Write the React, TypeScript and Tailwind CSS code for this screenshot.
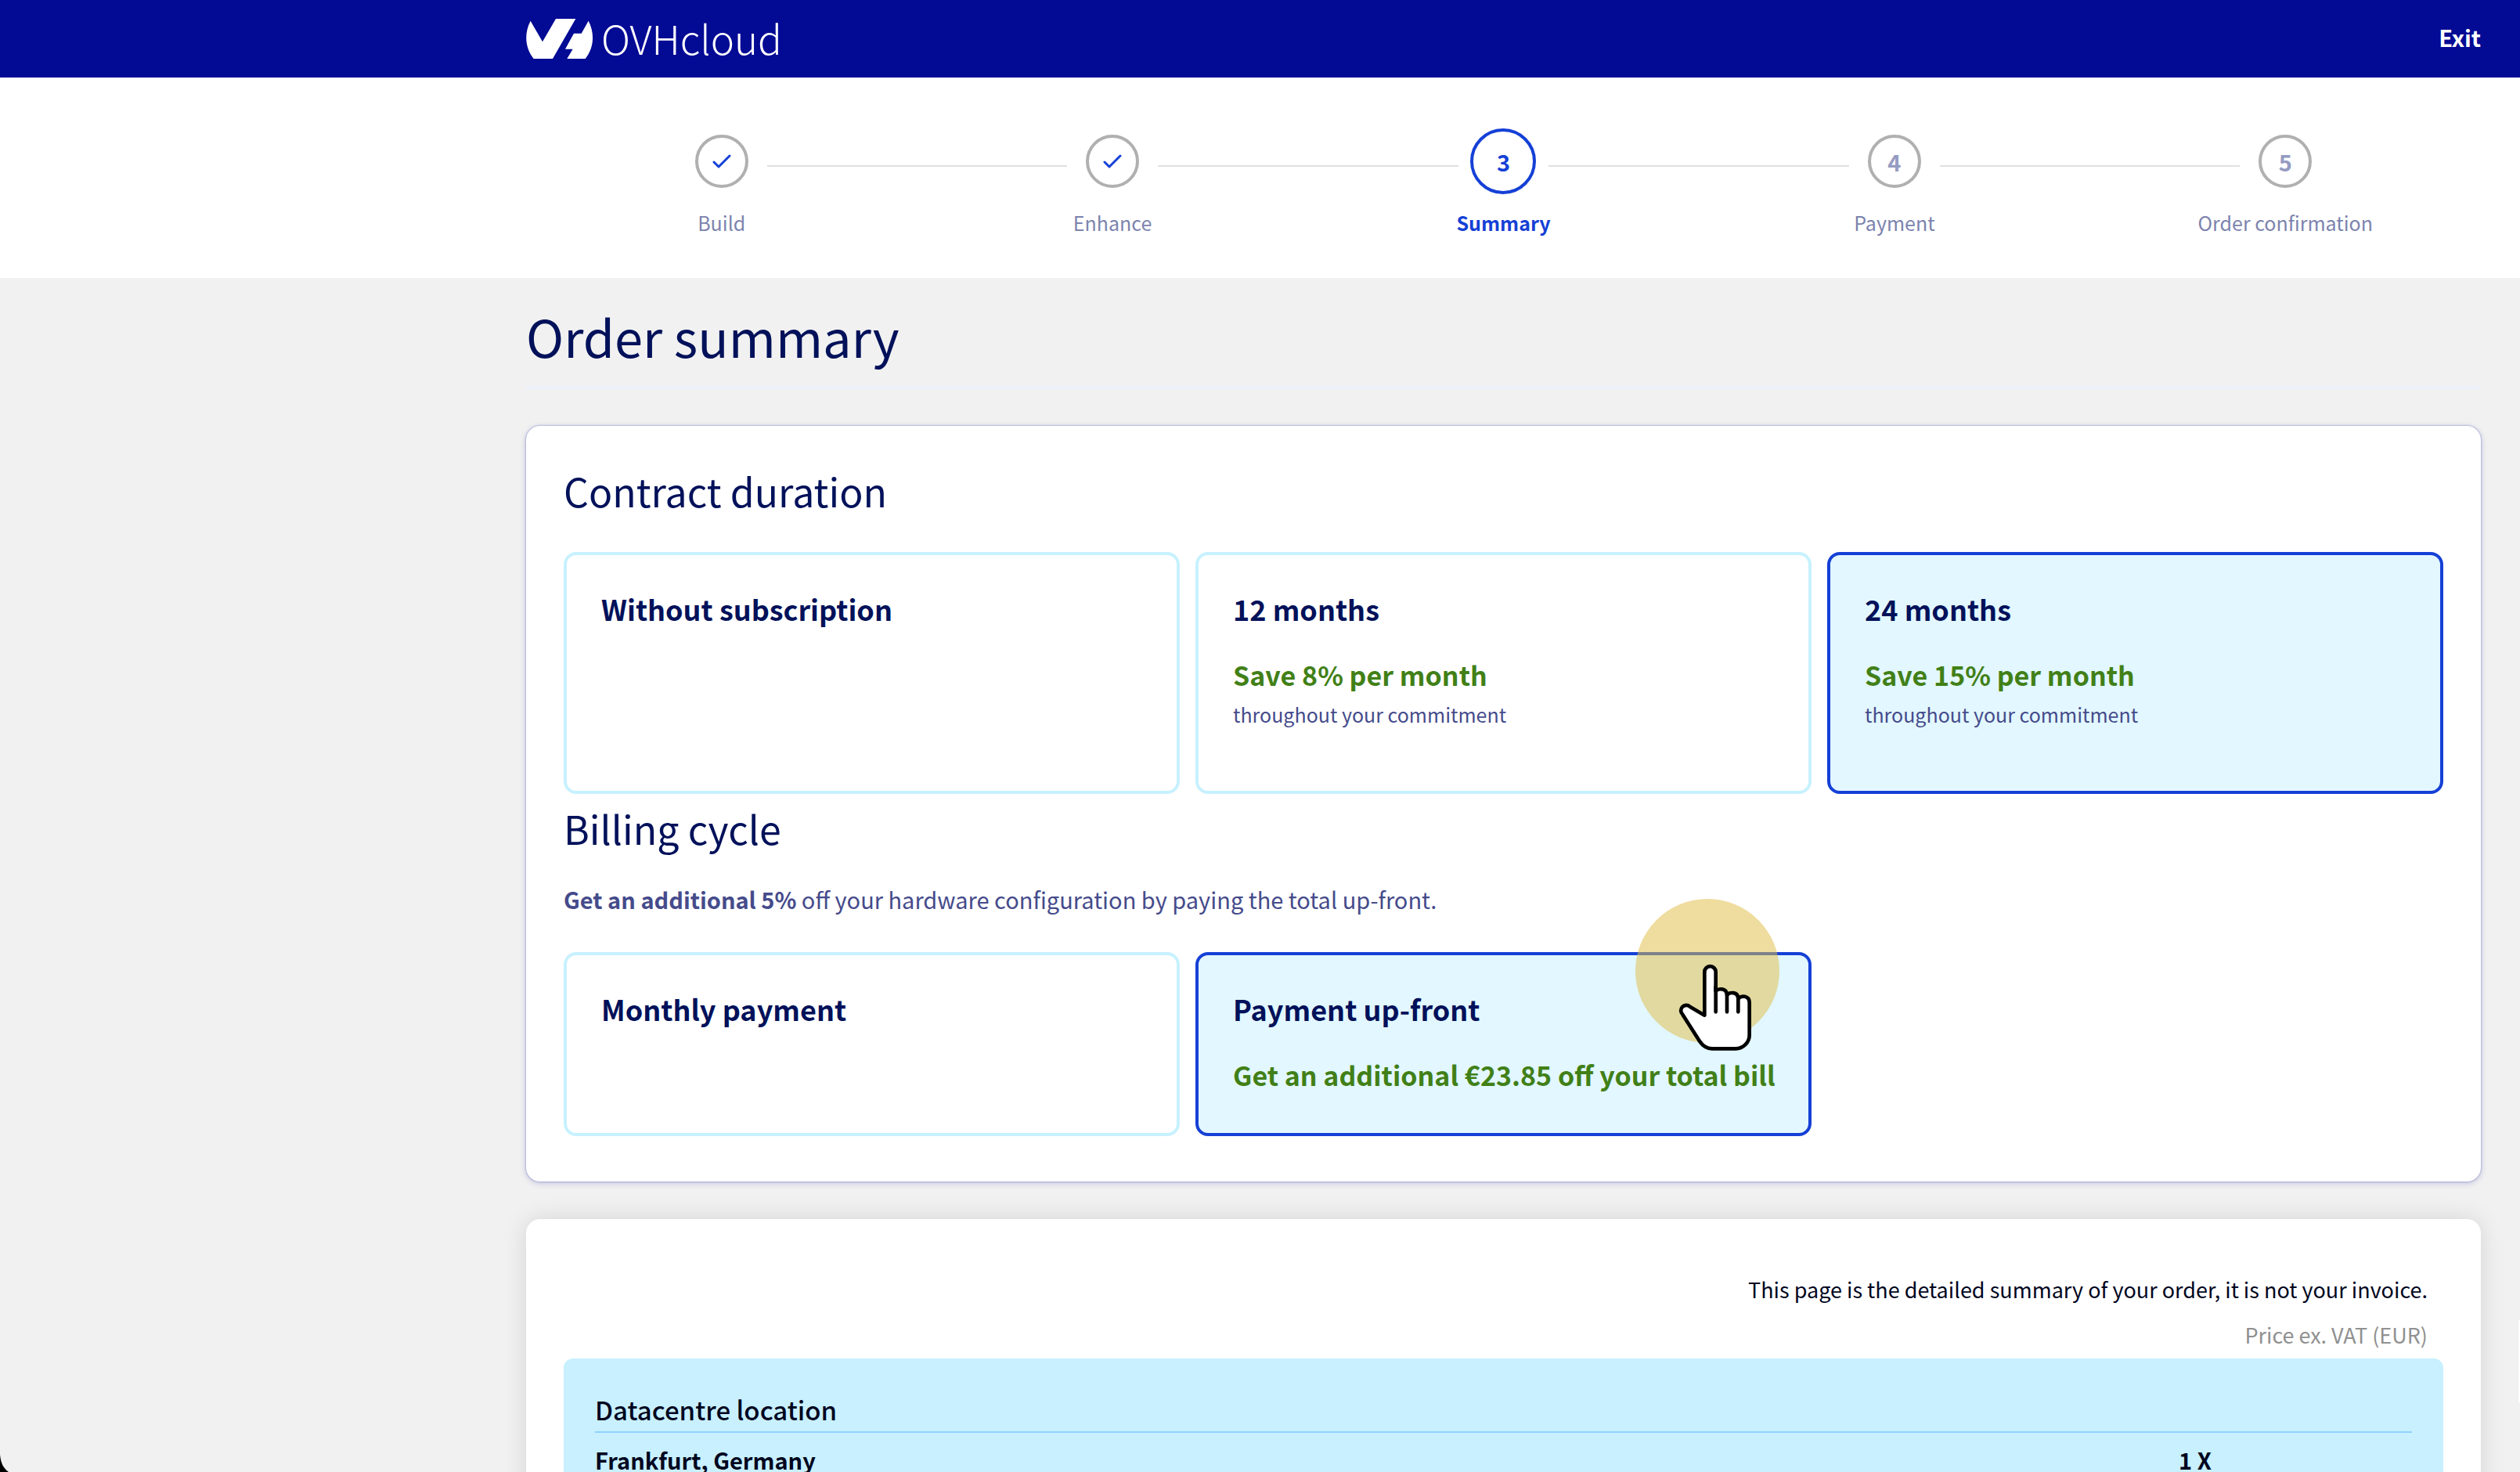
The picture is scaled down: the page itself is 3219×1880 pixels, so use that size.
import React from "react";

type StepState = "done" | "active" | "todo";

const steps: { label: string; state: StepState }[] = [
  { label: "Build", state: "done" },
  { label: "Enhance", state: "done" },
  { label: "Summary", state: "active" },
  { label: "Payment", state: "todo" },
  { label: "Order confirmation", state: "todo" },
];

function Logo() {
  return (
    <a href="#home" className="flex items-center gap-[10px] text-white" aria-label="OVHcloud">
      <svg viewBox="96 72 256 153" className="h-[51px] w-[86px]" fill="currentColor" aria-hidden="true">
        <path d="M112 80 L158 160 L209 72 H285 L197 225 H124 C92 185 86 130 112 80Z" />
        <path d="M334 80 C360 130 354 185 322 225 H252 L274 188 H245 L278 128 H307Z" />
      </svg>
      <span className="pb-1 text-[51px] leading-[60px] font-light">OVHcloud</span>
    </a>
  );
}

function StepCircle({ index, state }: { index: number; state: StepState }) {
  if (state === "active") {
    return (
      <span className="flex size-[84px] items-center justify-center rounded-full border-4 border-[#1540d6] text-[29px] leading-none font-bold text-[#1540d6]">
        {index}
      </span>
    );
  }
  return (
    <span className="flex size-[68px] items-center justify-center rounded-full border-4 border-[#b0b0b0] text-[29px] leading-none font-bold text-[#959bc2]">
      {state === "done" ? (
        <svg viewBox="0 0 24 18" className="h-[18px] w-6" fill="none" stroke="#1540d6" strokeWidth="3" strokeLinecap="round" strokeLinejoin="round" aria-label="Completed">
          <path d="M2 10 L8 16 L22 2" />
        </svg>
      ) : (
        index
      )}
    </span>
  );
}

function Stepper() {
  return (
    <nav aria-label="Order progress" className="bg-white pt-[65px] pr-[50px] pb-[51px] pl-[672px]">
      <ol className="grid grid-cols-5">
        {steps.map((step, i) => (
          <li key={step.label} className="relative flex flex-col items-center" aria-current={step.state === "active" ? "step" : undefined}>
            {i < steps.length - 1 && (
              <span className="absolute top-[47px] left-[calc(50%+58px)] h-0.5 w-[calc(100%-116px)] bg-[#e0e0e0]" />
            )}
            <div className="flex h-[84px] items-center">
              <StepCircle index={i + 1} state={step.state} />
            </div>
            <span
              className={
                step.state === "active"
                  ? "mt-4 text-[25px] leading-[40px] font-bold text-[#1540d6]"
                  : "mt-4 text-[25px] leading-[40px] text-[#7c83ae]"
              }
            >
              {step.label}
            </span>
          </li>
        ))}
      </ol>
    </nav>
  );
}

function HandPointer() {
  return (
    <svg
      viewBox="116 84 552 552"
      className="pointer-events-none absolute -top-[72px] right-[37px] size-[184px] overflow-visible"
      aria-hidden="true"
    >
      <circle cx="392" cy="360" r="276" fill="rgba(224,190,70,0.52)" />
      <g stroke="#000" strokeWidth="14" strokeLinecap="round" strokeLinejoin="round">
        <path
          fill="#fff"
          d="M381 530 V364 a21.5 21.5 0 0 1 43 0 V438 C432 426 467 424 467 453 C475 440 510 438 510 467 C518 454 553 452 553 482 V605 a53 53 0 0 1 -53 53 H410 Q382 658 364 632 L297 527 A20 20 0 0 1 325 497 Z"
        />
        <path fill="none" d="M424 420 V517 M467 450 V517 M510 465 V517" />
      </g>
    </svg>
  );
}

type OptionProps = {
  group: string;
  title: string;
  saving?: string;
  note?: string;
  selected?: boolean;
  pointer?: boolean;
};

function Option({ group, title, saving, note, selected, pointer }: OptionProps) {
  return (
    <label
      className={
        selected
          ? "relative block cursor-pointer rounded-2xl border-4 border-[#1540d6] bg-[#e2f7ff] p-11"
          : "relative block cursor-pointer rounded-2xl border-4 border-[#c7f1ff] bg-white p-11"
      }
    >
      <input type="radio" name={group} defaultChecked={selected} className="sr-only" />
      <span className="block text-[36px] leading-[48px] font-bold text-[#00115a]">{title}</span>
      {saving && (
        <span className="mt-[37px] block text-[34px] leading-[48px] font-bold whitespace-nowrap text-[#418017]">{saving}</span>
      )}
      {note && <span className="mt-2 block text-[25px] leading-9 text-[#454b8b]">{note}</span>}
      {pointer && <HandPointer />}
    </label>
  );
}

export default function App() {
  return (
    <div className="relative h-screen overflow-hidden bg-[#f1f1f1] font-['Noto_Sans_CJK_JP','Open_Sans',sans-serif]">
      <header className="flex h-[99px] items-center justify-between bg-[#030a94] pr-[50px] pl-[672px]">
        <Logo />
        <a href="#exit" className="pb-1.5 text-[29px] leading-[44px] font-bold text-white">
          Exit
        </a>
      </header>

      <Stepper />

      <main className="pr-[50px] pl-[672px]">
        <h1 className="border-b-4 border-[#edf1fa] pt-8 pb-[22px] text-[65px] leading-[84px] text-[#00115a]">
          Order summary
        </h1>

        <section className="mt-[47px] rounded-[18px] bg-white px-12 pt-[50px] pb-[58px] shadow-[0_0_2px_1px_rgba(0,14,156,0.2),0_2px_8px_rgba(0,14,156,0.2)]">
          <h2 className="text-[50px] leading-[64px] text-[#00115a]">Contract duration</h2>
          <div className="mt-[47px] grid min-h-[309px] grid-cols-3 gap-5" role="radiogroup" aria-label="Contract duration">
            <Option group="duration" title="Without subscription" />
            <Option group="duration" title="12 months" saving="Save 8% per month" note="throughout your commitment" />
            <Option group="duration" title="24 months" saving="Save 15% per month" note="throughout your commitment" selected />
          </div>

          <h2 className="mt-[11px] text-[50px] leading-[64px] text-[#00115a]">Billing cycle</h2>
          <p className="mt-[37px] text-[29px] leading-[44px] text-[#454b8b]">
            <strong className="font-bold">Get an additional 5%</strong> off your hardware configuration by paying the total up-front.
          </p>
          <div className="mt-[46px] grid min-h-[235px] grid-cols-3 gap-5" role="radiogroup" aria-label="Billing cycle">
            <Option group="billing" title="Monthly payment" />
            <Option group="billing" title="Payment up-front" saving="Get an additional €23.85 off your total bill" selected pointer />
          </div>
        </section>

        <section className="mt-12 rounded-[18px] bg-white px-12 pt-[70px] shadow-[0_0_30px_rgba(0,0,0,0.12)]">
          <div className="pr-5 text-right">
            <p className="text-[27px] leading-[40px] text-[#00061e]">
              This page is the detailed summary of your order, it is not your invoice.
            </p>
            <p className="mt-[18px] text-[27px] leading-[40px] text-[#909090]">Price ex. VAT (EUR)</p>
          </div>
          <div className="mt-[10px] rounded-xl bg-[#c8f0ff] px-10 pt-[41px] pb-10 text-[#00061e]">
            <table className="w-full text-left">
              <thead>
                <tr className="border-b-2 border-[#90d2ff]">
                  <th colSpan={2} className="pb-1 text-[33px] leading-[48px] font-medium">
                    Datacentre location
                  </th>
                </tr>
              </thead>
              <tbody>
                <tr className="text-[29px] leading-[44px] font-bold">
                  <td className="pt-3">Frankfurt, Germany</td>
                  <td className="w-[298px] pt-3">1 X</td>
                </tr>
              </tbody>
            </table>
          </div>
        </section>
      </main>

      <span className="absolute right-0 bottom-[89px] h-[106px] w-0.5 rounded-l-full bg-white" />
      <svg viewBox="0 0 11 22" className="absolute bottom-0 left-0 h-[22px] w-[11px]" fill="#000" aria-hidden="true">
        <path d="M0 0 C1 10 4 17 11 22 H0Z" />
      </svg>
    </div>
  );
}
